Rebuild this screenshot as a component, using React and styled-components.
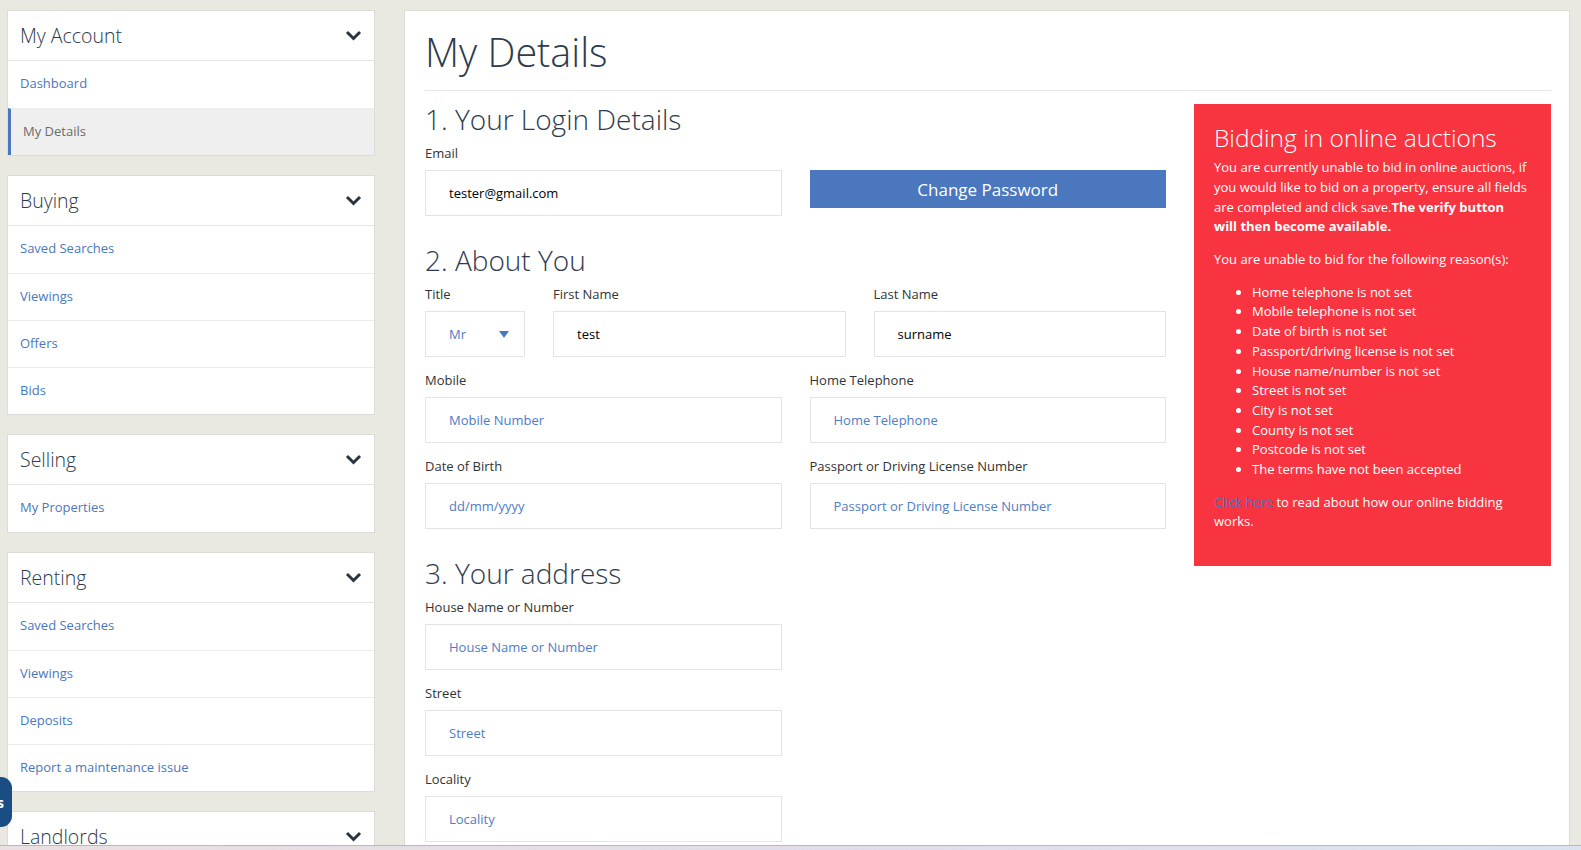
import React from 'react';
import styled, { createGlobalStyle } from 'styled-components';

const GlobalStyle = createGlobalStyle`
  html, body {
    margin: 0;
    padding: 0;
    background: #e9e9e2;
    font-family: "Open Sans", "Liberation Sans", sans-serif;
    color: #333;
  }
  * {
    box-sizing: border-box;
  }
`;

// Layout
const Page = styled.div`
  display: flex;
  align-items: flex-start;
  gap: 29px;
  padding: 10px 11px 0 7px;
`;

const Sidebar = styled.aside`
  width: 368px;
  flex-shrink: 0;
  display: flex;
  flex-direction: column;
  gap: 19px;
`;

const NavCard = styled.div`
  background: #fff;
  border: 1px solid #dcdcd6;
`;

const NavHeader = styled.div`
  height: 50px;
  display: flex;
  align-items: center;
  justify-content: space-between;
  padding: 0 12px 0 12px;
  border-bottom: 1px solid #e6e6e6;
  font-size: 19.5px;
  font-weight: 300;
  color: #2c3a4c;
`;

const NavItem = styled.a`
  display: flex;
  align-items: center;
  height: 47px;
  padding: 0 0 3px 12px;
  border-top: 1px solid #ececec;
  border-left: ${p => (p.$active ? '3px solid #4a77bd' : 'none')};
  background: ${p => (p.$active ? '#efefef' : '#fff')};
  color: ${p => (p.$active ? '#6b6b6b' : '#4a77bd')};
  font-size: 13px;
  text-decoration: none;
  cursor: pointer;
  &:first-of-type {
    border-top: none;
  }
`;

const Main = styled.main`
  flex: 1;
  background: #fff;
  border: 1px solid #dcdcd5;
  padding: 19px 18px 40px 20px;
  min-height: 900px;
`;

const PageTitle = styled.h1`
  margin: 0;
  padding-bottom: 16px;
  border-bottom: 1px solid #e5e5e5;
  font-size: 39.5px;
  line-height: 44px;
  font-weight: 300;
  color: #2e3b4e;
`;

const Content = styled.div`
  display: grid;
  grid-template-columns: 741px 357px;
  column-gap: 28px;
  align-items: start;
  margin-top: 13px;
`;

const Form = styled.div`
  display: flex;
  flex-direction: column;
`;

const SectionTitle = styled.h2`
  margin: ${p => (p.$first ? '0' : '29px')} 0 8px;
  font-size: 28px;
  line-height: 31px;
  font-weight: 300;
  color: #2e3b4e;
`;

const Row = styled.div`
  display: grid;
  grid-template-columns: ${p => p.$cols || '1fr 1fr'};
  column-gap: 28px;
  & + & {
    margin-top: 13px;
  }
`;

const Field = styled.div`
  display: flex;
  flex-direction: column;
`;

const Label = styled.label`
  font-size: 13px;
  line-height: 20px;
  height: 20px;
  margin-bottom: 7px;
  color: #333;
`;

const Input = styled.input`
  height: 46px;
  width: 100%;
  border: 1px solid #e4e4e4;
  padding: 0 12px 0 23px;
  font-family: inherit;
  font-size: 13px;
  color: #000;
  outline: none;
  &::placeholder {
    color: #4f7cc4;
    opacity: 1;
  }
`;

const SelectBox = styled.div`
  height: 46px;
  border: 1px solid #e4e4e4;
  display: flex;
  align-items: center;
  justify-content: space-between;
  padding: 0 15px 0 23px;
  font-size: 13px;
  color: #4f7cc4;
`;

const Caret = styled.span`
  width: 0;
  height: 0;
  border-left: 5px solid transparent;
  border-right: 5px solid transparent;
  border-top: 7px solid #4a77bd;
`;

const Button = styled.button`
  height: 38px;
  width: 100%;
  border: none;
  background: #4a77bd;
  color: #fff;
  font-family: inherit;
  font-size: 17px;
  cursor: pointer;
`;

const Notice = styled.div`
  background: #f7343f;
  color: #fff;
  padding: 20px 22.5px 21px 20px;
  font-size: 13px;
  line-height: 19.7px;
  p {
    margin: 0 0 13px;
  }
  ul {
    margin: 0 0 13px;
    padding-left: 38px;
  }
`;

const NoticeTitle = styled.h3`
  margin: 0 0 5.6px;
  font-size: 24.5px;
  line-height: 28.6px;
  font-weight: 300;
`;

const NoticeLink = styled.a`
  color: #5470c4;
  text-decoration: none;
`;

const SideTab = styled.div`
  position: fixed;
  left: 0;
  top: 777px;
  width: 12px;
  height: 50px;
  border-radius: 0 11px 11px 0;
  background: #1b4d85;
  overflow: hidden;
  display: flex;
  align-items: center;
  color: #fff;
  font-weight: 700;
  font-size: 14px;
  span {
    margin-left: -3px;
  }
`;

const BottomStrip = styled.div`
  position: fixed;
  left: 0;
  right: 0;
  bottom: 0;
  height: 5px;
  border-top: 1px solid #b9b9bd;
  background: linear-gradient(90deg, #eadfe2, #e2dde8 50%, #dbe3f0);
`;

function Chevron() {
  return (
    <svg width="17" height="11" viewBox="0 0 17 11">
      <path d="M2 2 L8.5 8.5 L15 2" fill="none" stroke="#283441" strokeWidth="3" />
    </svg>
  );
}

const nav = [
  { title: 'My Account', items: ['Dashboard', 'My Details'], active: 'My Details' },
  { title: 'Buying', items: ['Saved Searches', 'Viewings', 'Offers', 'Bids'] },
  { title: 'Selling', items: ['My Properties'] },
  { title: 'Renting', items: ['Saved Searches', 'Viewings', 'Deposits', 'Report a maintenance issue'] },
  { title: 'Landlords', items: ['My Properties'] },
];

const reasons = [
  'Home telephone is not set',
  'Mobile telephone is not set',
  'Date of birth is not set',
  'Passport/driving license is not set',
  'House name/number is not set',
  'Street is not set',
  'City is not set',
  'County is not set',
  'Postcode is not set',
  'The terms have not been accepted',
];

export default function App() {
  return (
    <>
      <GlobalStyle />
      <Page>
        <Sidebar>
          {nav.map(group => (
            <NavCard key={group.title}>
              <NavHeader>
                {group.title}
                <Chevron />
              </NavHeader>
              {group.items.map(item => (
                <NavItem key={item} $active={item === group.active}>
                  {item}
                </NavItem>
              ))}
            </NavCard>
          ))}
        </Sidebar>

        <Main>
          <PageTitle>My Details</PageTitle>
          <Content>
            <Form>
              <SectionTitle $first>1. Your Login Details</SectionTitle>
              <Row>
                <Field>
                  <Label>Email</Label>
                  <Input defaultValue="tester@gmail.com" />
                </Field>
                <Field>
                  <Label />
                  <Button>Change Password</Button>
                </Field>
              </Row>

              <SectionTitle>2. About You</SectionTitle>
              <Row $cols="100px 1fr 1fr">
                <Field>
                  <Label>Title</Label>
                  <SelectBox>
                    Mr
                    <Caret />
                  </SelectBox>
                </Field>
                <Field>
                  <Label>First Name</Label>
                  <Input defaultValue="test" />
                </Field>
                <Field>
                  <Label>Last Name</Label>
                  <Input defaultValue="surname" />
                </Field>
              </Row>
              <Row>
                <Field>
                  <Label>Mobile</Label>
                  <Input placeholder="Mobile Number" />
                </Field>
                <Field>
                  <Label>Home Telephone</Label>
                  <Input placeholder="Home Telephone" />
                </Field>
              </Row>
              <Row>
                <Field>
                  <Label>Date of Birth</Label>
                  <Input placeholder="dd/mm/yyyy" />
                </Field>
                <Field>
                  <Label>Passport or Driving License Number</Label>
                  <Input placeholder="Passport or Driving License Number" />
                </Field>
              </Row>

              <SectionTitle>3. Your address</SectionTitle>
              <Row>
                <Field>
                  <Label>House Name or Number</Label>
                  <Input placeholder="House Name or Number" />
                </Field>
              </Row>
              <Row>
                <Field>
                  <Label>Street</Label>
                  <Input placeholder="Street" />
                </Field>
              </Row>
              <Row>
                <Field>
                  <Label>Locality</Label>
                  <Input placeholder="Locality" />
                </Field>
              </Row>
            </Form>

            <Notice>
              <NoticeTitle>Bidding in online auctions</NoticeTitle>
              <p>
                You are currently unable to bid in online auctions, if you would like to bid on a
                property, ensure all fields are completed and click save.
                <strong>The verify button will then become available.</strong>
              </p>
              <p>You are unable to bid for the following reason(s):</p>
              <ul>
                {reasons.map(r => (
                  <li key={r}>{r}</li>
                ))}
              </ul>
              <p>
                <NoticeLink>Click here</NoticeLink> to read about how our online bidding works.
              </p>
            </Notice>
          </Content>
        </Main>
      </Page>
      <SideTab>
        <span>s</span>
      </SideTab>
      <BottomStrip />
    </>
  );
}
